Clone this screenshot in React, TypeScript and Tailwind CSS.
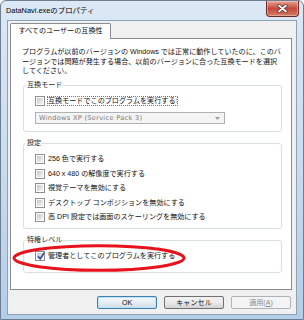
import React from 'react';

const Check = ({ checked = false }: { checked?: boolean }) => (
  <span className="relative flex w-[10px] h-[10px] shrink-0 border border-[#8e8f8f] bg-white p-[1px]">
    <span className="flex-1 bg-gradient-to-br from-[#c3c7cc] to-[#f6f6f7]" />
    {checked && (
      <svg className="absolute left-0 top-[-1px]" width="10" height="10" viewBox="0 0 10 10">
        <path d="M2 5.2 L4.2 7.8 L8.2 1.8" fill="none" stroke="#2f4f9c" strokeWidth="1.6" />
      </svg>
    )}
  </span>
);

const Row = ({ label, checked, focus }: { label: string; checked?: boolean; focus?: boolean }) => (
  <div className="flex items-center h-[10px] pl-[9px]">
    <Check checked={checked} />
    <span
      className={
        focus
          ? 'ml-[2px] px-[1px] leading-[10px] outline outline-1 outline-dotted outline-[#777] -outline-offset-1'
          : 'ml-[3px] leading-[10px]'
      }
    >
      {label}
    </span>
  </div>
);

const Group = ({
  title,
  className,
  children,
}: {
  title: string;
  className: string;
  children: React.ReactNode;
}) => (
  <fieldset className={'border border-[#d5dfe5] rounded-[3px] px-[2px] ml-[12px] mr-[9px] ' + className}>
    <legend className="px-[1px] h-[10px] leading-[10px] text-[#1e1e1e]">{title}</legend>
    {children}
  </fieldset>
);

export default function App() {
  return (
    <div className="w-[304px] h-[320px] flex flex-col overflow-hidden rounded-t-[6px] border border-[#6d7d92] bg-gradient-to-b from-[#dce8f5] via-[#c9dcf0] to-[#b4cde8] font-['Liberation_Sans','Noto_Sans_CJK_JP',sans-serif] text-[7.1px] text-[#111]">
      {/* title bar */}
      <div className="h-[19px] flex items-start shrink-0">
        <span className="ml-[5px] mt-[5px] leading-[10px] text-[7.4px] text-black">DataNavi.exeのプロパティ</span>
        <div className="ml-auto mr-[4px] w-[33px] h-[16px] flex items-center justify-center rounded-b-[4px] border border-t-0 border-[#6b2a25] bg-gradient-to-b from-[#e6a497] via-[#c4483d] to-[#d27a60] shadow-[inset_0_0_0_1px_rgba(255,210,200,0.5)]">
          <svg width="11" height="9" viewBox="0 0 11 9">
            <path d="M2 1.5 L9 7.5 M9 1.5 L2 7.5" stroke="#5a2420" strokeWidth="3.2" strokeLinecap="round" />
            <path d="M2 1.5 L9 7.5 M9 1.5 L2 7.5" stroke="#ffffff" strokeWidth="1.8" strokeLinecap="round" />
          </svg>
        </div>
      </div>

      {/* client */}
      <div className="mx-[6px] mb-[4px] flex-1 flex flex-col border border-[#8fa1b5] bg-[#f0f0f0] pt-[2px] pl-[2px] pr-[4px]">
        <div className="flex">
          <div className="relative z-10 -mb-[1px] w-[101px] h-[16px] flex items-center justify-center rounded-t-[2px] border border-b-0 border-[#898c95] bg-white">
            すべてのユーザーの互換性
          </div>
        </div>

        <div className="relative h-[252px] border border-[#898c95] bg-white">
          <div className="h-[39px] pt-[9px] pl-[11px] leading-[9.5px] whitespace-nowrap">
            プログラムが以前のバージョンの Windows では正常に動作していたのに、このバ
            <br />
            ージョンでは問題が発生する場合、以前のバージョンに合った互換モードを選択
            <br />
            してください。
          </div>

          <Group title="互換モード" className="mt-[2px] pt-[6px] pb-[7px]">
            <Row label="互換モードでこのプログラムを実行する:" focus />
            <div className="mt-[6px] ml-[9px] w-[190px] h-[12px] flex items-center border border-[#adb2b5] bg-[#f4f4f4] pl-[3px] pr-[4px] text-[#7a7a7a] tracking-[0.3px]">
              <span className="font-['DejaVu_Sans',sans-serif] text-[6.6px] leading-[10px]">Windows XP (Service Pack 3)</span>
              <svg className="ml-auto" width="5" height="3" viewBox="0 0 5 3">
                <path d="M0 0 H5 L2.5 3 Z" fill="#9a9a9a" />
              </svg>
            </div>
          </Group>

          <Group title="設定" className="mt-[6px] pt-[6px] pb-[6px]">
            <div className="flex flex-col gap-[4.5px]">
              <Row label="256 色で実行する" />
              <Row label="640 x 480 の解像度で実行する" />
              <Row label="視覚テーマを無効にする" />
              <Row label="デスクトップ コンポジションを無効にする" />
              <Row label="高 DPI 設定では画面のスケーリングを無効にする" />
            </div>
          </Group>

          <Group title="特権レベル" className="mt-[6px] pt-[6px] pb-[11px]">
            <Row label="管理者としてこのプログラムを実行する" checked />
          </Group>

          {/* red annotation ellipse */}
          <svg className="absolute left-[1px] top-[205px]" width="174" height="28" viewBox="0 0 174 28">
            <ellipse cx="87" cy="14" rx="85" ry="12.3" fill="none" stroke="#e8121c" strokeWidth="3" />
          </svg>
        </div>

        <div className="mt-[6px] flex justify-end gap-[7px] pr-[1px]">
          <div className="w-[60px] h-[13px] flex items-center justify-center rounded-[2px] border border-[#3c7fb1] bg-gradient-to-b from-[#f4f8fb] via-[#e6eef5] to-[#cfdbe6] shadow-[inset_0_0_0_1px_#bfe3f7] leading-[10px]">
            OK
          </div>
          <div className="w-[60px] h-[13px] flex items-center justify-center rounded-[2px] border border-[#707070] bg-gradient-to-b from-[#f2f2f2] via-[#ebebeb] to-[#d2d2d2] leading-[10px]">
            キャンセル
          </div>
          <div className="w-[60px] h-[13px] flex items-center justify-center rounded-[2px] border border-[#adb2b5] bg-[#f4f4f4] text-[#8a8a8a] leading-[10px]">
            適用(<span className="underline">A</span>)
          </div>
        </div>
      </div>
    </div>
  );
}
